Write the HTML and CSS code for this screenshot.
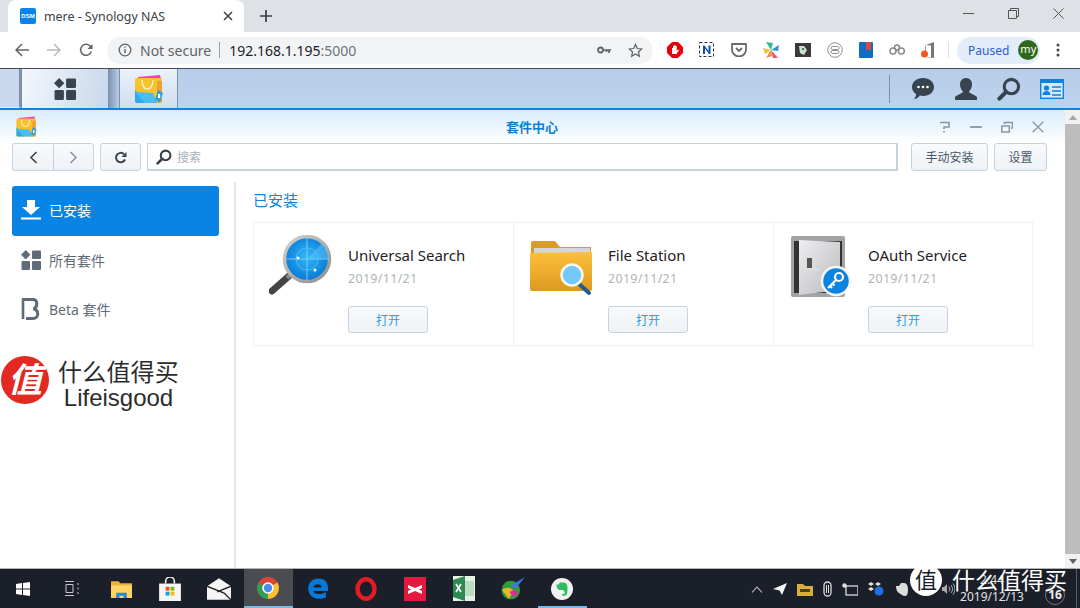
FILE: index.html
```html
<!DOCTYPE html>
<html lang="zh">
<head>
<meta charset="utf-8">
<title>mere - Synology NAS</title>
<link rel="stylesheet" href="styles.css">
</head>
<body>
<svg class="defs" width="0" height="0">
  <defs>
    <symbol id="bag" viewBox="0 0 32 32">
      <path d="M5 4 27 2 28 6 5 8z" fill="#e83fd0"/>
      <rect x="2" y="5" width="27" height="25" rx="2" fill="#f7c22b"/>
      <path d="M2 17 14 30H4a2 2 0 0 1-2-2z" fill="#2fa9ec"/>
      <path d="M2 19 20 20 24 30H12z" fill="#49bdf2"/>
      <path d="M24 8h5v20a2 2 0 0 1-2 2h-3z" fill="#e9a23a"/>
      <path d="M9 7c0 12 11 12 11 0" fill="none" stroke="#fff3c4" stroke-width="1.4"/>
      <path d="M25 17l5 3-3 9-5-2z" fill="#2b9fe0"/>
      <rect x="25" y="21" width="2.2" height="4" fill="#fff"/>
    </symbol>
    <symbol id="grid" viewBox="0 0 20 20">
      <path d="M4.7 0 9.4 4.7 4.7 9.4 0 4.7z"/>
      <rect x="11" y="0.5" width="9" height="8.500" rx="1"/>
      <rect x="0.500" y="11" width="8.500" height="9" rx="1"/>
      <rect x="11" y="11" width="9" height="9" rx="1"/>
    </symbol>
    <symbol id="lens" viewBox="0 0 20 20">
      <circle cx="12" cy="8" r="6" fill="none" stroke="currentColor" stroke-width="2.600"/>
      <path d="M7.500 12.500 2 18" stroke="currentColor" stroke-width="3.400" stroke-linecap="round"/>
    </symbol>
    <radialGradient id="radar" cx=".5" cy=".45" r=".6">
      <stop offset="0" stop-color="#33b7f5"/><stop offset="1" stop-color="#0272d5"/>
    </radialGradient>
    <linearGradient id="folder" x1="0" y1="0" x2="0" y2="1">
      <stop offset="0" stop-color="#fdbf3d"/><stop offset="1" stop-color="#dd9a1e"/>
    </linearGradient>
    <linearGradient id="door" x1="0" y1="0" x2="1" y2="1">
      <stop offset="0" stop-color="#eeeef0"/><stop offset="1" stop-color="#b9babd"/>
    </linearGradient>
    <linearGradient id="rim" x1="0" y1="0" x2="1" y2="1">
      <stop offset="0" stop-color="#d4d2cc"/><stop offset="1" stop-color="#8f8f8b"/>
    </linearGradient>
  </defs>
</svg>

<header class="tabstrip">
  <div class="tab">
    <span class="favicon">DSM</span>
    <span class="tab-title">mere - Synology NAS</span>
    <svg class="tab-close" width="10" height="10" viewBox="0 0 10 10"><path d="M1 1l8 8M9 1l-8 8" stroke="#3c4043" stroke-width="1.500"/></svg>
  </div>
  <svg class="new-tab" width="12" height="12" viewBox="0 0 12 12"><path d="M6 0v12M0 6h12" stroke="#3c4043" stroke-width="1.700"/></svg>
  <div class="win-controls">
    <svg width="11" height="11" viewBox="0 0 11 11"><path d="M0 5.500h11" stroke="#555" stroke-width="1"/></svg>
    <svg width="11" height="11" viewBox="0 0 11 11"><path d="M.5 2.500h8v8h-8zM2.500 2.500v-2h8v8h-2" fill="none" stroke="#555"/></svg>
    <svg width="11" height="11" viewBox="0 0 11 11"><path d="M.5.500l10 10M10.500.500l-10 10" stroke="#555"/></svg>
  </div>
</header>

<div class="toolbar">
  <svg class="nav-ico" width="14" height="14" viewBox="0 0 14 14"><path d="M14 7H1.500M7 1 1 7l6 6" fill="none" stroke="#5f6368" stroke-width="1.500"/></svg>
  <svg class="nav-ico" width="14" height="14" viewBox="0 0 14 14"><path d="M0 7h12.500M7 1l6 6-6 6" fill="none" stroke="#b6b9bd" stroke-width="1.500"/></svg>
  <svg class="nav-ico" width="14" height="14" viewBox="0 0 14 14"><path d="M12.300 8.500A5.500 5.500 0 1 1 11 3L13 5" fill="none" stroke="#5f6368" stroke-width="1.500"/><path d="M13.500 1v5h-5z" fill="#5f6368"/></svg>
  <div class="omnibox">
    <svg width="14" height="14" viewBox="0 0 14 14"><circle cx="7" cy="7" r="5.800" fill="none" stroke="#5f6368" stroke-width="1.300"/><path d="M7 6v4.300M7 3.500v1.300" stroke="#5f6368" stroke-width="1.400"/></svg>
    <span class="not-secure">Not secure</span>
    <span class="omni-sep"></span>
    <span class="url">192.168.1.195<span class="port">:5000</span></span>
    <svg class="omni-key" width="14" height="10" viewBox="0 0 14 10"><circle cx="3.500" cy="5" r="2.500" fill="none" stroke="#5f6368" stroke-width="1.800"/><path d="M6 5h8M12 5v3M9.500 5v2" stroke="#5f6368" stroke-width="1.700"/></svg>
    <svg width="15" height="15" viewBox="0 0 24 24"><path d="M12 2.500l2.900 6.300 6.900.8-5.100 4.700 1.400 6.800-6.100-3.400-6.100 3.400 1.400-6.800L2.200 9.600l6.900-.8z" fill="none" stroke="#5f6368" stroke-width="2"/></svg>
  </div>
  <div class="exts">
    <svg width="16" height="16" viewBox="0 0 16 16"><path d="M5 0h6l5 5v6l-5 5H5l-5-5V5z" fill="#e8000d"/><path d="M5 12V6h1v3-5h1.200v5-6h1.300v6-5h1.200v5l1.300-1.500 1 .6L9.500 12z" fill="#fff"/></svg>
    <svg width="16" height="16" viewBox="0 0 16 16"><rect x=".5" y=".5" width="14" height="14" fill="none" stroke="#333" stroke-dasharray="3 2"/><path d="M4 12V3.500h1.500L9.500 9V3.500H11.500V12H10L6 6.500V12z" fill="#0f4ea3"/></svg>
    <svg width="16" height="14" viewBox="0 0 16 14"><path d="M1 1h14v5.500a7 7 0 0 1-14 0z" fill="none" stroke="#6b6b6b" stroke-width="1.800" stroke-linejoin="round"/><path d="M5 5l3 3 3-3" fill="none" stroke="#6b6b6b" stroke-width="1.800"/></svg>
    <svg width="16" height="16" viewBox="0 0 16 16"><path d="M8 8 3 0l7 1z" fill="#2dbb8f"/><path d="M8 8l8-5-1 6z" fill="#2b97d8"/><path d="M8 8 0 6l2 6z" fill="#f5c02e"/><path d="M8 8l-5 8 6-2z" fill="#f08a3c"/><path d="M8 8l7 8-5 0z" fill="#e9546b"/></svg>
    <svg width="16" height="14" viewBox="0 0 16 14"><rect width="16" height="14" fill="#3b3a38"/><path d="M4 3h5l3 4-3 5-4-2z" fill="#cfe0d3"/><path d="M7 5h2v2H7z" fill="#3b7d4f"/></svg>
    <svg width="16" height="16" viewBox="0 0 16 16"><circle cx="8" cy="8" r="7.300" fill="none" stroke="#8e8e8e"/><rect x="4" y="4.500" width="8" height="3" rx="1.500" fill="none" stroke="#8e8e8e"/><rect x="4" y="8.500" width="8" height="3" rx="1.500" fill="none" stroke="#8e8e8e"/></svg>
    <svg width="14" height="16" viewBox="0 0 14 16"><rect width="14" height="16" rx="1" fill="#0e6ec2"/><path d="M7 0h5v9L9.500 7 7 9z" fill="#e0483e"/></svg>
    <svg width="16" height="12" viewBox="0 0 16 12"><g fill="none" stroke="#8a8a8a" stroke-width="1.500"><circle cx="4" cy="7" r="3"/><circle cx="8" cy="3.500" r="2.500"/><circle cx="12.300" cy="7" r="3"/></g></svg>
    <svg width="14" height="16" viewBox="0 0 14 16"><path d="M5 3l8-3v16l-8-1h5V3.500z" fill="#777"/><path d="M5 3v6H4V4z" fill="#999"/><circle cx="3.500" cy="12" r="3.500" fill="#ef5a1b"/></svg>
  </div>
  <span class="tb-sep"></span>
  <div class="profile">
    <span class="paused">Paused</span>
    <span class="avatar">my</span>
  </div>
  <svg class="menu-dots" width="4" height="14" viewBox="0 0 4 14"><circle cx="2" cy="2" r="1.500" fill="#444"/><circle cx="2" cy="7" r="1.500" fill="#444"/><circle cx="2" cy="12" r="1.500" fill="#444"/></svg>
</div>

<nav class="dsm-bar">
  <div class="dsm-stub"></div>
  <div class="dsm-btn dsm-btn-main"><svg class="dsm-grid" width="22" height="22"><use href="#grid"/></svg></div>
  <div class="dsm-notch"></div>
  <div class="dsm-btn dsm-btn-app"><svg width="32" height="32"><use href="#bag"/></svg></div>
  <div class="dsm-right">
    <span class="dsm-rsep"></span>
    <svg width="24" height="22" viewBox="0 0 24 22"><path d="M12 0c6.500 0 11 4 11 9s-4.500 9-11 9c-1 0-2-.1-3-.4C7.500 19.500 5.500 21 3 21c1.500-1.500 2-3 2-5-2.500-1.500-4-4-4-7 0-5 4.500-9 11-9z" fill="#37434f"/><circle cx="7.500" cy="9" r="1.300" fill="#fff"/><circle cx="12" cy="9" r="1.300" fill="#fff"/><circle cx="16.500" cy="9" r="1.300" fill="#fff"/></svg>
    <svg width="24" height="22" viewBox="0 0 24 22"><path d="M12 0c4 0 6 3 6 6.500 0 3-1.500 5.500-3 7 0 2 5 2.500 8 5.500v3H1v-3c3-3 8-3.500 8-5.500-1.500-1.500-3-4-3-7C6 3 8 0 12 0z" fill="#37434f"/></svg>
    <svg class="dsm-search" width="24" height="24"><use href="#lens"/></svg>
    <svg width="24" height="20" viewBox="0 0 24 20"><rect x=".7" y=".7" width="22.600" height="18.600" fill="#d7e8f8" stroke="#0a84e0" stroke-width="1.400"/><rect x="1" y="1" width="22" height="3" fill="#0a84e0"/><circle cx="6.500" cy="9" r="2.600" fill="#0a84e0"/><path d="M2.500 16c0-3 2-4 4-4s4 1 4 4z" fill="#0a84e0"/><path d="M12 8h9M12 12h9M12 16h9" stroke="#0a84e0" stroke-width="1.600"/></svg>
  </div>
</nav>

<div class="viewport">
  <main class="window">
    <div class="win-title">
      <svg class="win-logo" width="23" height="23"><use href="#bag"/></svg>
      <span class="win-name">套件中心</span>
      <div class="win-actions">
        <svg width="12" height="12" viewBox="0 0 12 12"><path d="M1 1.500h9v4.500H5v2" fill="none" stroke="#8a96a3" stroke-width="1.600"/><path d="M4.200 10h1.600v1.600H4.200z" fill="#8a96a3"/></svg>
        <svg width="12" height="12" viewBox="0 0 12 12"><path d="M0 6h12" stroke="#8a96a3" stroke-width="1.800"/></svg>
        <svg width="12" height="12" viewBox="0 0 12 12"><path d="M.8 5h7.500v6H.8zM3.500 3V1.500h8V7H10" fill="none" stroke="#8a96a3" stroke-width="1.500"/></svg>
        <svg width="12" height="12" viewBox="0 0 12 12"><path d="M.7.700l10.600 10.600M11.300.700.700 11.300" stroke="#8a96a3" stroke-width="1.300"/></svg>
      </div>
    </div>
    <div class="win-tools">
      <div class="btn-group">
        <button class="btn btn-nav"><svg width="9" height="13" viewBox="0 0 9 13"><path d="M7.500 1 2 6.500l5.500 5.500" fill="none" stroke="#37434f" stroke-width="1.600"/></svg></button>
        <button class="btn btn-nav"><svg width="9" height="13" viewBox="0 0 9 13"><path d="M1.500 1 7 6.500 1.500 12" fill="none" stroke="#8a96a3" stroke-width="1.600"/></svg></button>
      </div>
      <button class="btn btn-refresh"><svg width="13" height="13" viewBox="0 0 13 13"><path d="M11 8.500A4.700 4.700 0 1 1 10 3.200" fill="none" stroke="#37434f" stroke-width="2"/><path d="M12.500 1v5h-5z" fill="#37434f"/></svg></button>
      <div class="search-box">
        <svg class="search-ico" width="16" height="16"><use href="#lens"/></svg>
        <span class="search-ph">搜索</span>
      </div>
      <button class="btn btn-text btn-install">手动安装</button>
      <button class="btn btn-text btn-settings">设置</button>
    </div>
    <div class="win-body">
      <aside class="sidebar">
        <div class="side-item active">
          <svg width="20" height="20" viewBox="0 0 20 20"><path d="M6 0h8v7h5l-9 8-9-8h5z" fill="#fff"/><rect y="17.500" width="20" height="2" fill="#fff"/></svg>
          <span>已安装</span>
        </div>
        <div class="side-item">
          <svg class="side-grid" width="20" height="20"><use href="#grid"/></svg>
          <span>所有套件</span>
        </div>
        <div class="side-item">
          <svg width="20" height="22" viewBox="0 0 20 22"><path d="M2 1v20" stroke="#5f6b78" stroke-width="2.600"/><path d="M1 1.500h11c5 0 5 8 .5 9.500 6 1 5.500 9.500-.5 9.500H5" fill="none" stroke="#5f6b78" stroke-width="3"/></svg>
          <span>Beta 套件</span>
        </div>
      </aside>
      <section class="content">
        <h2 class="section-title">已安装</h2>
        <div class="cards">
          <article class="card">
            <svg class="app-icon" width="64" height="64" viewBox="0 0 64 64">
              <path d="M3 56 20 41" stroke="#444" stroke-width="7" stroke-linecap="round"/>
              <path d="M18 43 24 37" stroke="#888" stroke-width="4"/>
              <circle cx="38" cy="24" r="22.500" fill="url(#radar)" stroke="url(#rim)" stroke-width="3.500"/>
              <path d="M38 2v44M16 24h44" stroke="#8fd6fb" stroke-width=".8"/>
              <circle cx="38" cy="24" r="11" fill="none" stroke="#58c1f6" stroke-width=".8"/>
              <path d="M38 24 53 8a22 22 0 0 1 7 16z" fill="#5ec6f7" opacity=".5"/>
              <circle cx="29" cy="23" r="1.500" fill="#fff"/><circle cx="46" cy="35" r="1.500" fill="#fff"/>
            </svg>
            <div class="card-body">
              <div class="app-name">Universal Search</div>
              <div class="app-date">2019/11/21</div>
              <button class="btn btn-open">打开</button>
            </div>
          </article>
          <article class="card">
            <svg class="app-icon" width="64" height="64" viewBox="0 0 64 64">
              <path d="M2 8a2 2 0 0 1 2-2h22l5 6h31v14H2z" fill="#d99b2c"/>
              <rect x="5" y="13" width="56" height="8" fill="#d4d6d8"/>
              <path d="M1 18l61-1a1 1 0 0 1 1 1v36a2 2 0 0 1-2 2H3a2 2 0 0 1-2-2z" fill="url(#folder)"/>
              <path d="M49 48 60 58" stroke="#1d5f8f" stroke-width="4" stroke-linecap="round"/>
              <circle cx="43" cy="40" r="10.500" fill="#74c9fb" stroke="#fbf6e6" stroke-width="2.500"/>
            </svg>
            <div class="card-body">
              <div class="app-name">File Station</div>
              <div class="app-date">2019/11/21</div>
              <button class="btn btn-open">打开</button>
            </div>
          </article>
          <article class="card">
            <svg class="app-icon" width="64" height="64" viewBox="0 0 64 64">
              <rect x="2" y="1" width="54" height="61" rx="2" fill="#a2a3a5"/>
              <rect x="5" y="6" width="48" height="52" fill="#333"/>
              <path d="M10 5 51 7v48L10 60z" fill="url(#door)"/>
              <rect x="18" y="23" width="5" height="10" fill="#555"/>
              <rect x="18" y="33" width="12" height="3" fill="#ddd"/>
              <circle cx="47" cy="46" r="14" fill="#0a84e0" stroke="#f4f4f4" stroke-width="2.500"/>
              <circle cx="50" cy="42" r="4" fill="none" stroke="#fff" stroke-width="2.200"/>
              <path d="M47 45 39 53M41 51l2 2M43.500 48.500l2 2" stroke="#fff" stroke-width="2.200"/>
            </svg>
            <div class="card-body">
              <div class="app-name">OAuth Service</div>
              <div class="app-date">2019/11/21</div>
              <button class="btn btn-open">打开</button>
            </div>
          </article>
        </div>
      </section>
    </div>
    <div class="watermark">
      <span class="wm-circle">值</span>
      <div class="wm-text">
        <span class="wm-cn">什么值得买</span>
        <span class="wm-en">Lifeisgood</span>
      </div>
    </div>
  </main>
  <div class="scrollbar">
    <div class="scroll-end"><svg width="8" height="5" viewBox="0 0 8 5"><path d="M4 0l4 5H0z" fill="#a6a6a6"/></svg></div>
    <div class="scroll-thumb"></div>
    <div class="scroll-end"><svg width="8" height="5" viewBox="0 0 8 5"><path d="M4 5l4-5H0z" fill="#606060"/></svg></div>
  </div>
</div>

<footer class="taskbar">
  <div class="task-item task-start"><svg width="14" height="14" viewBox="0 0 14 14"><path d="M0 2l6-.9V6.500H0zM7 1l7-1v6.500H7zM0 7.500h6v5.400l-6-.9zM7 7.500h7V14l-7-1z" fill="#fff"/></svg></div>
  <div class="task-item"><svg width="16" height="15" viewBox="0 0 16 15"><path d="M1 .5h9M1 14.500h9M2 3.500h7v8H2zM14 2v2M14 6.500v2M14 11v2" fill="none" stroke="#c9c9c9"/></svg></div>
  <div class="task-item"><svg width="21" height="19" viewBox="0 0 20 18"><path d="M0 2h7l2 2h11v14H0z" fill="#e9b23a"/><path d="M0 6h20v12H0z" fill="#fcd364"/><path d="M5 18v-5h10v5h-3v-2H8v2z" fill="#1f88d8"/></svg></div>
  <div class="task-item"><svg width="22" height="24" viewBox="0 0 20 22"><path d="M6 6V4a4 4 0 0 1 8 0v2" fill="none" stroke="#eee" stroke-width="1.500"/><rect y="6" width="20" height="16" fill="#f5f5f5"/><rect x="6" y="9" width="3.500" height="3.500" fill="#f25022"/><rect x="10.500" y="9" width="3.500" height="3.500" fill="#7fba00"/><rect x="6" y="13.500" width="3.500" height="3.500" fill="#00a4ef"/><rect x="10.500" y="13.500" width="3.500" height="3.500" fill="#ffb900"/></svg></div>
  <div class="task-item"><svg width="24" height="22" viewBox="0 0 21 19"><path d="M0 7 10.500 0 21 7v12H0z" fill="#f5f5f5"/><path d="M0 7l15 6 6 6" fill="none" stroke="#222" stroke-width="1.200"/><path d="M21 7 9 12" stroke="#222" stroke-width="1.200"/></svg></div>
  <div class="task-item task-active"><svg width="22" height="22" viewBox="0 0 22 22"><circle cx="11" cy="11" r="11" fill="#db4437"/><path d="M11 11 20.500 5.500A11 11 0 0 1 11 22z" fill="#fbc02d"/><path d="M11 11 11 22A11 11 0 0 1 1.500 5.500z" fill="#2e9e4f"/><circle cx="11" cy="11" r="5" fill="#4a8cf0" stroke="#fff" stroke-width="1.600"/></svg></div>
  <div class="task-item"><svg width="21" height="22" viewBox="0 0 20 20"><path d="M1 9C2 3 6 0 11 0c5 0 9 3 9 9v3H6c.5 3 6 4 12 1v5c-8 3-15 0-16-5-.5 0-.5-2-1-4zm5-.500h8c0-4-7-4-8 0z" fill="#0a78d7"/></svg></div>
  <div class="task-item"><svg width="22" height="24" viewBox="0 0 22 24"><ellipse cx="11" cy="12" rx="8.500" ry="9.700" fill="none" stroke="#e01d25" stroke-width="4.500"/></svg></div>
  <div class="task-item"><svg width="22" height="24" viewBox="0 0 22 24"><rect width="22" height="24" fill="#e5183f"/><path d="M4 8l7 3 7-3v3l-3 1.500 3 1.500v3l-7-3-7 3v-3l3-1.500L4 11z" fill="#fff"/></svg></div>
  <div class="task-item"><svg width="22" height="25" viewBox="0 0 22 25"><rect width="22" height="25" fill="#e4f1e6"/><path d="M11 5h10v15H11z" fill="#bcdcc4"/><path d="M0 4l12-4v25L0 21z" fill="#2c8a52"/><path d="M3 8l5 8M8 8l-5 8" stroke="#fff" stroke-width="1.600"/></svg></div>
  <div class="task-item"><svg width="24" height="24" viewBox="0 0 22 22"><circle cx="9" cy="12" r="8.500" fill="#2f9e3e"/><path d="M1 12c3-3 8-3 11 1L7 20z" fill="#e9b52c"/><path d="M8 14c3-3 6-2 8 0l-4 5z" fill="#d82e9a"/><path d="M9 8l4 3 9-11z" fill="#3f78e0"/></svg></div>
  <div class="task-item task-running"><svg width="22" height="22" viewBox="0 0 20 20"><circle cx="10" cy="10" r="10" fill="#f2f2f2"/><path d="M5 6h2l1-2h3c3 0 4 2 4 5s0 6-2 7c-2 .500-3 0-3-1s2-1 2 0c1-2 0-4-2-4H8C6 11 5 9 5 6z" fill="#2dbe60"/></svg></div>
  <div class="tray">
    <svg width="12" height="7" viewBox="0 0 12 7"><path d="M1 6.500 6 1l5 5.500" fill="none" stroke="#c9c9c9" stroke-width="1.100"/></svg>
    <svg width="14" height="13" viewBox="0 0 14 13"><path d="M0 6 14 0 9 12 6.500 7.500z" fill="#f5f5f5"/></svg>
    <svg width="16" height="13" viewBox="0 0 16 13"><path d="M0 1h6l2 2h8v10H0z" fill="#d8ad3a"/><rect x="3" y="6" width="10" height="3" fill="#4b3d16"/></svg>
    <svg width="9" height="16" viewBox="0 0 9 16"><rect x="1" y="1" width="7" height="14" rx="3.500" fill="none" stroke="#ddd" stroke-width="1.300"/><path d="M3.500 4v8M5.500 4v8" stroke="#ddd"/></svg>
    <svg width="16" height="13" viewBox="0 0 16 13"><rect x="4" y="3" width="12" height="9" fill="none" stroke="#ddd" stroke-width="1.300"/><circle cx="2.500" cy="2.500" r="2.200" fill="#ddd"/></svg>
    <svg width="16" height="14" viewBox="0 0 16 14"><path d="M0 2l3-2 3 2-3 2zM7 2l3-2 3 2-3 2zM3 5l3 2-3 2-3-2zM10 5l3 2-3 2-3-2z" fill="#ddd"/><circle cx="11" cy="9" r="4.500" fill="#1e6fe0"/></svg>
    <svg width="15" height="15" viewBox="0 0 15 15"><path d="M2 4h3l2-3h3c3 0 4 3 4 7s-1 6-3 6-4-2-6-3C3 10 2 7 2 4z" fill="#ddd"/></svg>
    <svg class="tray-speaker" width="13" height="14" viewBox="0 0 13 14"><path d="M0 5h2l3-3v10L2 9H0z" fill="#aaa"/><path d="M7 4.500a4 4 0 0 1 0 5M9 3a6.500 6.500 0 0 1 0 8M11 1.500a8.500 8.500 0 0 1 0 11" fill="none" stroke="#aaa"/></svg>
  </div>
  <div class="clock">
    <span class="clock-time">2:44</span>
    <span class="clock-date">2019/12/13</span>
  </div>
  <span class="notif">16</span>
  <div class="task-edge"></div>
  <div class="tb-watermark">
    <span class="tbw-circle">值</span>
    <span class="tbw-text">什么值得买</span>
  </div>
</footer>
</body>
</html>
```

FILE: styles.css
```css
* { box-sizing: border-box; }
html, body { margin: 0; padding: 0; }
body {
  width: 1080px;
  height: 608px;
  overflow: hidden;
  position: relative;
  display: flex;
  flex-direction: column;
  font-family: "Noto Sans", "Noto Sans CJK SC", sans-serif;
  background: #fff;
}
.defs { position: absolute; }
svg { display: block; flex: none; }

/* browser tab strip */
.tabstrip {
  height: 32px;
  flex: none;
  background: #dee1e6;
  display: flex;
  align-items: flex-end;
  padding-left: 8px;
}
.tab {
  width: 236px;
  height: 32px;
  background: #fff;
  border-radius: 8px 8px 0 0;
  display: flex;
  align-items: center;
  padding: 0 0 0 12px;
}
.favicon {
  width: 16px;
  height: 16px;
  background: #0a84e8;
  border-radius: 2px;
  color: #fff;
  font: bold 6px/16px "Liberation Sans", sans-serif;
  text-align: center;
}
.tab-title { margin-left: 8px; width: 179px; font-size: 12.400px; color: #3c4043; white-space: nowrap; }
.new-tab { margin: 0 0 10px 16px; }
.win-controls {
  margin-left: auto;
  height: 11px;
  display: flex;
  align-items: center;
  gap: 34px;
  padding-right: 16px;
  align-self: flex-start;
  margin-top: 8px;
}

/* browser toolbar */
.toolbar {
  height: 37px;
  flex: none;
  background: #fff;
  display: flex;
  align-items: center;
  padding-left: 15px;
  border-bottom: 1px solid #3f4a59;
}
.nav-ico { margin-right: 18px; }
.nav-ico + .nav-ico + .nav-ico { margin-right: 14px; }
.omnibox {
  width: 546px;
  height: 27px;
  border-radius: 14px;
  background: #f1f3f4;
  display: flex;
  align-items: center;
  padding: 0 10px 0 11px;
  font-size: 14px;
  white-space: nowrap;
}
.not-secure { margin-left: 8px; color: #5f6368; }
.omni-sep { width: 1px; height: 16px; background: #9aa0a6; margin: 0 9px 0 8px; }
.url { color: #202124; font-size: 14px; }
.port { color: #70757a; }
.omni-key { margin-left: auto; margin-right: 17px; }
.exts { display: flex; align-items: center; gap: 16px; margin-left: 14px; }
.tb-sep { width: 1px; height: 16px; background: #dadce0; margin: 0 8px 0 13px; }
.profile {
  width: 83px;
  height: 27px;
  border-radius: 14px;
  background: #e3ecf9;
  display: flex;
  align-items: center;
  padding-left: 11px;
}
.paused { color: #2a5fcb; font-size: 12px; }
.avatar {
  width: 20px;
  height: 20px;
  border-radius: 50%;
  background: #2f6a1c;
  color: #fff;
  font-size: 11px;
  line-height: 17px;
  text-align: center;
  margin-left: 9px;
}
.menu-dots { margin-left: 16px; }

/* DSM task bar */
.dsm-bar {
  height: 41px;
  flex: none;
  display: flex;
  align-items: stretch;
  background: linear-gradient(#b7cde9, #bcd3ee);
  border-bottom: 2px solid #0886e4;
}
.dsm-stub { width: 21px; border-bottom: 1px solid #e6eef8; border-right: 2px solid #7f8fa6; background: #c9d8ee; }
.dsm-btn { display: flex; align-items: center; justify-content: center; border-right: 1px solid #7f8fa6; border-left: 1px solid #7f8fa6; }
.dsm-btn-main { width: 88px; background: linear-gradient(100deg, #f4f7fb, #c9d8ec); }
.dsm-notch { width: 10px; background: linear-gradient(90deg, #8095b3, #b7cde9); }
.dsm-btn-app { width: 59px; background: linear-gradient(#eaf1f9, #d0def0); }
.dsm-grid { color: #37434f; fill: #37434f; }
.dsm-right { margin-left: auto; display: flex; align-items: center; gap: 19px; padding-right: 16px; }
.dsm-rsep { width: 1px; height: 28px; background: #7f8fa6; margin-right: 2px; }
.dsm-search { color: #37434f; }

/* viewport and window */
.viewport { flex: 1; min-height: 0; display: flex; }
.window { flex: 1; min-width: 0; position: relative; display: flex; flex-direction: column; background: #fff; }
.scrollbar { width: 15px; background: #bdbdbd; display: flex; flex-direction: column; }
.scroll-end { height: 14px; background: #f1f1f1; display: flex; align-items: center; justify-content: center; }
.scroll-thumb { flex: 1; }
.win-title {
  height: 33px;
  flex: none;
  background: linear-gradient(#d7ecfb, #fff);
  display: flex;
  align-items: center;
  position: relative;
  padding-left: 15px;
}
.win-name {
  position: absolute;
  left: 506px;
  top: 8px;
  font-size: 13px;
  line-height: 18px;
  font-weight: 700;
  color: #0a7fd9;
}
.win-actions { margin-left: auto; display: flex; gap: 19px; align-items: center; padding-right: 21px; }
.win-tools { height: 28px; flex: none; display: flex; padding: 0 18px 0 12px; }
.btn {
  font-family: inherit;
  border: 1px solid #c6d2e0;
  border-radius: 3px;
  background: linear-gradient(#f8fafc, #eef2f6);
  color: #4a5866;
  padding: 0;
  display: flex;
  align-items: center;
  justify-content: center;
}
.btn-group { display: flex; }
.btn-nav { width: 41px; }
.btn-group .btn-nav:first-child { border-radius: 3px 0 0 3px; border-right: 0; }
.btn-group .btn-nav:last-child { border-radius: 0 3px 3px 0; }
.btn-refresh { width: 41px; margin-left: 6px; }
.search-box {
  width: 751px;
  margin-left: 6px;
  border: 1px solid #c6d2e0;
  border-width: 1px 2px 2px 1px;
  display: flex;
  align-items: center;
  padding-left: 8px;
  background: #fff;
}
.search-ico { color: #37434f; }
.search-ph { margin-left: 5px; font-size: 12px; color: #a8b0b8; }
.btn-text { font-size: 12px; }
.btn-install { width: 77px; margin-left: 13px; }
.btn-settings { width: 53px; margin-left: 6px; }

.win-body { flex: 1; min-height: 0; display: flex; padding-top: 11px; }
.sidebar { width: 236px; flex: none; border-right: 2px solid #e4e8ec; padding: 4px 15px 0 12px; }
.side-item {
  height: 50px;
  border-radius: 3px;
  display: flex;
  align-items: center;
  gap: 8px;
  padding: 0 0 2px 9px;
  margin-bottom: -0.500px;
  font-size: 14px;
  color: #5f6b78;
}
.side-item.active { background: #0a84e4; color: #fff; }
.side-grid { fill: #5f6b78; }
.content { flex: 1; min-width: 0; padding: 8px 0 0 17px; }
.section-title { margin: 0; font-size: 15px; line-height: 20px; font-weight: 400; color: #0a84e0; }
.cards {
  display: grid;
  grid-template-columns: 260px 260px 1fr;
  width: 780px;
  height: 124px;
  margin-top: 12px;
  border: 1px solid #eef0f2;
}
.card { display: flex; padding: 12px 0 0 15px; border-right: 1px solid #eef0f2; }
.card:last-child { border-right: 0; }
.app-icon { margin-right: 15px; }
.card-body { display: flex; flex-direction: column; align-items: flex-start; }
.app-name { font-size: 15px; line-height: 20px; margin-top: 10px; color: #222; white-space: nowrap; }
.app-date { font-size: 12.500px; line-height: 16px; margin-top: 6px; color: #b0b4b8; letter-spacing: .3px; }
.btn-open { width: 80px; height: 27px; margin-top: 19px; font-size: 12px; color: #2d9be8; }

/* watermark */
.watermark { position: absolute; left: 1px; top: 246px; display: flex; gap: 9px; align-items: flex-start; }
.wm-circle {
  width: 48px;
  height: 48px;
  border-radius: 50%;
  background: #e22a23;
  color: #fff;
  font-size: 34px;
  font-style: italic;
  font-weight: 700;
  line-height: 46px;
  text-align: center;
}
.wm-text { display: flex; flex-direction: column; align-items: center; color: #2b2b2b; margin-top: 2px; }
.wm-cn { font-size: 24px; line-height: 28px; letter-spacing: .2px; }
.wm-en { font: 24px/26px "Liberation Sans", sans-serif; margin-top: -1px; }

/* windows taskbar */
.taskbar {
  height: 40px;
  flex: none;
  position: relative;
  background: #1b1f29;
  border-top: 1px solid #b5b5b5;
  display: flex;
  align-items: center;
}
.task-item {
  width: 49px;
  height: 39px;
  display: flex;
  align-items: center;
  justify-content: center;
}
.task-start { margin-left: -1.500px; }
.task-active { background: #4a4c52; border-bottom: 2px solid #76b9ed; }
.task-running { box-shadow: inset 0 -2px 0 #76b9ed; }
.tray { position: absolute; left: 751px; top: 12px; display: flex; gap: 10px; align-items: center; }
.tray-speaker { margin-left: 23px; }
.clock { position: absolute; left: 960px; top: 3px; width: 64px; display: flex; flex-direction: column; gap: 1px; align-items: center; color: #e2e2e2; font-size: 12px; line-height: 16px; }
.clock-date { white-space: nowrap; }
.notif {
  position: absolute;
  left: 1045px;
  top: 16px;
  width: 20px;
  height: 20px;
  border-radius: 50%;
  border: 1px solid #777;
  color: #eee;
  font-size: 12px;
  font-weight: 700;
  line-height: 18px;
  text-align: center;
}
.task-edge { position: absolute; right: 3px; top: 0; bottom: 0; width: 1px; background: #5a5e66; }
.tb-watermark { position: absolute; left: 910px; top: -5px; display: flex; align-items: center; gap: 10px; }
.tbw-circle {
  width: 32px;
  height: 32px;
  border-radius: 50%;
  background: #fff;
  color: #1b1f29;
  font-size: 22px;
  line-height: 30px;
  text-align: center;
}
.tbw-text { color: #fff; font-size: 23px; line-height: 30px; }
```
